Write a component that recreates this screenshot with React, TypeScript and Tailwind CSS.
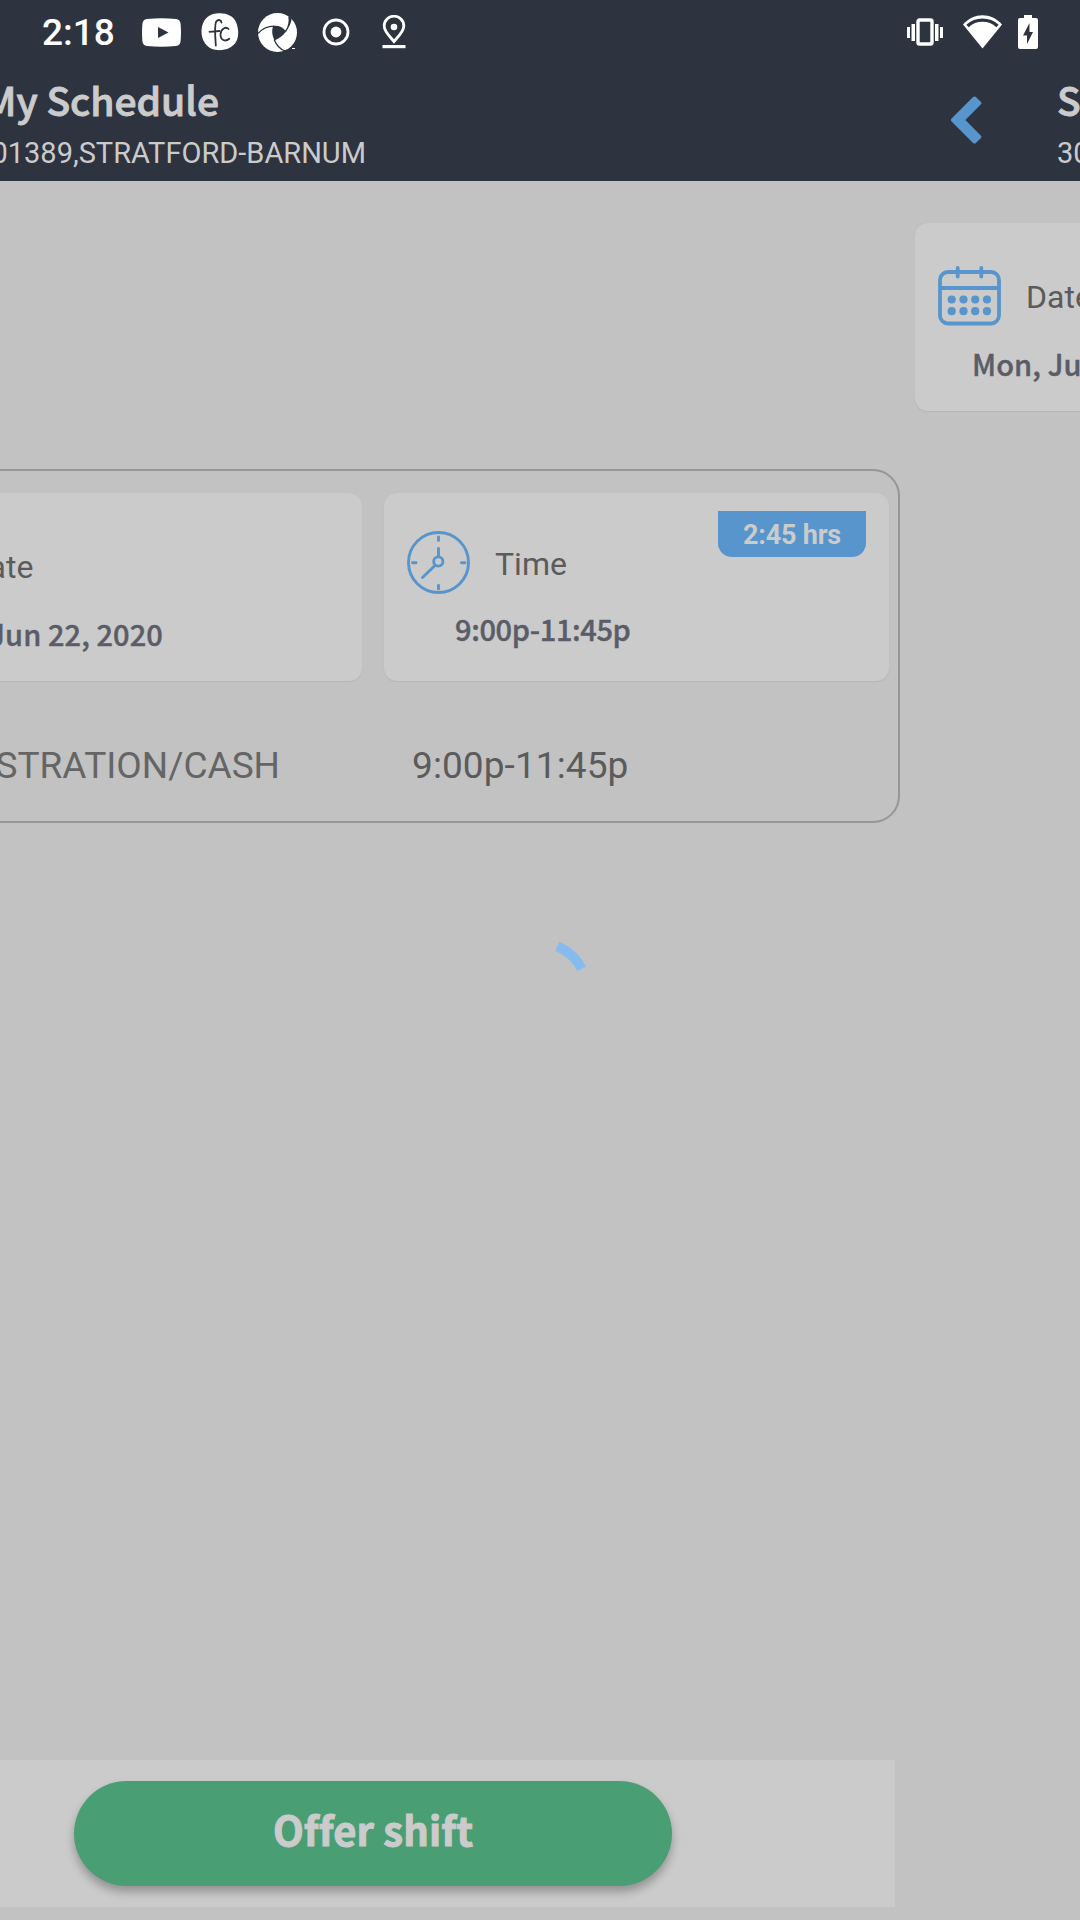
import React from "react";

const ROBOTO = "font-[Roboto,sans-serif]";
const SOURCE = "font-['Noto_Sans_CJK_SC',sans-serif]";

function YoutubeIcon() {
  return (
    <svg className="ml-[28px] h-[29px] w-[39px] shrink-0" viewBox="0 0 39 29">
      <path fill="#fff" d="M5 1Q19.500-.6 34 1Q38.300 1.500 38.600 6Q39.400 14.500 38.600 23Q38.300 27.500 34 28Q19.500 29.600 5 28Q.7 27.500.4 23Q-.4 14.500.4 6Q.7 1.500 5 1Z" />
      <path fill="#2d333f" d="M16 9L26.500 14.500L16 20Z" />
    </svg>
  );
}

function FcIcon() {
  return (
    <svg className="ml-[20px] h-[38px] w-[38px] shrink-0" viewBox="0 0 38 38">
      <path fill="#fff" d="M15 .6C24-.6 31.500 2 35 9C38.500 18 38 27 32.500 32C27 37.600 17 38.500 10 35.500C3 31.500.3 25 .5 17.500C1 8 6.500 1.500 15 .6Z" />
      <g fill="none" stroke="#2d333f" strokeWidth="1.800" strokeLinecap="round">
        <path d="M20.500 9.500C20 6.500 16.500 6 15 9C13.300 13 14.300 24 14.800 32.500" />
        <path d="M8.500 18.800L18.500 18" />
        <path d="M27.500 16C25 13.300 20 15.500 19.500 21C19.200 27.500 24.500 29 28.300 25.800" />
      </g>
    </svg>
  );
}

function PinwheelIcon() {
  return (
    <svg className="ml-[19px] h-[39px] w-[39px] shrink-0" viewBox="0 0 39 39">
      <circle cx="19.500" cy="19.500" r="19.500" fill="#fff" />
      <path fill="#2d333f" d="M15 13C20 12 25 14 28 18.500C25.500 22.500 21 25.500 16.500 27.500C14 22.500 13.500 18 15 13Z" />
      <g fill="none" stroke="#2d333f" strokeWidth="1.300">
        <path d="M0 20.500C4 16 10 13.200 16 13.200" />
        <path d="M27.500 18.500C30.500 14.500 32 9 31 3.500" />
        <path d="M16.200 26.500C18 31.500 22 36 27 38" />
      </g>
      <path fill="#2d333f" d="M30.800 3.500L33.500 5.500Q33.500 10 30 15Q31.800 9 30.800 3.500ZM25.500 39L26 37.500L33 35.300L36 33L39 36V39Z" />
      <path stroke="#fff" strokeWidth="1" d="M34 35.500h3" />
    </svg>
  );
}

function StatusBar() {
  return (
    <div className="flex h-[64px] shrink-0 items-center">
      <span className={`${ROBOTO} ml-[42px] w-[72px] pt-[1px] text-[37px] leading-[64px] font-medium whitespace-nowrap text-white`}>2:18</span>
      <YoutubeIcon />
      <FcIcon />
      <PinwheelIcon />
      <svg className="ml-[25px] h-[28px] w-[28px] shrink-0" viewBox="0 0 28 28">
        <circle cx="14" cy="14" r="12" fill="none" stroke="#fff" strokeWidth="2.800" />
        <circle cx="14" cy="14" r="5.400" fill="#fff" />
      </svg>
      <svg className="ml-[32px] h-[34px] w-[24px] shrink-0" viewBox="0 0 24 34">
        <path fill="none" stroke="#fff" strokeWidth="2.800" d="M12 26.500C7 20.500 2.200 16.500 2.200 11A9.800 9.800 0 0 1 21.800 11C21.800 16.500 17 20.500 12 26.500Z" />
        <circle cx="12" cy="12" r="3.300" fill="#fff" />
        <path fill="#fff" d="M.5 30h23v3.200h-23z" />
      </svg>
      <svg className="ml-[500px] h-[28px] w-[38px] shrink-0" viewBox="0 0 38 28">
        <g fill="#fff">
          <path d="M1 9h3v11H1zM5.500 6h3.500v17h-3.500zM29 6h3.500v17h-3.500zM34 9h3v11h-3z" />
        </g>
        <rect x="12" y="2" width="14" height="24" rx="1.500" fill="none" stroke="#fff" strokeWidth="3.400" />
      </svg>
      <svg className="ml-[19px] h-[34px] w-[39px] shrink-0" viewBox="0 0 39 34">
        <path fill="#fff" d="M0 9.500C11-2.800 28-2.800 39 9.500L19.500 33.500Z" />
        <path fill="none" stroke="#2d333f" strokeWidth="3.400" d="M4.500 11C13 3.200 26 3.200 34.500 11" />
      </svg>
      <svg className="ml-[16px] h-[34px] w-[20px] shrink-0" viewBox="0 0 20 34">
        <path fill="#fff" d="M6 0h8v3h4q2 0 2 2v27q0 2-2 2H2q-2 0-2-2V5q0-2 2-2h4z" />
        <path fill="#2d333f" d="M11.500 8L5 20.500h4V29L15 17h-3.500z" />
      </svg>
    </div>
  );
}

function Header() {
  return (
    <div className="flex h-[117px] shrink-0 text-[#cbcbcb]">
      <div className="flex w-[895px] flex-col">
        <div className={`${SOURCE} flex h-[70px] w-[219px] justify-end text-[39px] leading-[70px] font-medium whitespace-nowrap [-webkit-text-stroke:0.9px_#cbcbcb]`}>My Schedule</div>
        <div className={`${ROBOTO} flex w-[366px] justify-end text-[29px] leading-[38px] whitespace-nowrap`}>301389,STRATFORD-BARNUM</div>
      </div>
      <svg className="mt-[31px] ml-[55px] h-[50px] w-[32px] shrink-0" viewBox="0 0 32 50">
        <path fill="#5795cc" stroke="#5795cc" strokeWidth="4" strokeLinejoin="round" d="M24.500 3.500L29.300 8.200L12.500 25L29.300 41.800L24.500 46.500L3 25Z" />
      </svg>
      <div className="ml-[75px] w-[23px] overflow-hidden whitespace-nowrap">
        <div className={`${SOURCE} h-[70px] text-[39px] leading-[70px] font-medium [-webkit-text-stroke:0.9px_#cbcbcb]`}>Shift Details</div>
        <div className={`${ROBOTO} text-[29px] leading-[38px]`}>301389,STRATFORD-BARNUM</div>
      </div>
    </div>
  );
}

const CARD = "h-[188px] shrink-0 rounded-[13px] bg-[#cbcbcb] shadow-[0_1px_1px_#b6b6b6,0_0_1px_#b8b8b8]";

function CalendarIcon() {
  return (
    <svg className="h-[60px] w-[63px] shrink-0" viewBox="0 0 63 60">
      <g fill="none" stroke="#5795cc" strokeWidth="3.800">
        <rect x="2" y="6" width="59" height="51.500" rx="8" />
        <path d="M2 22h59" />
        <path d="M19.700 2v8.500M43.300 2v8.500" strokeLinecap="round" />
      </g>
      <g fill="#5795cc">
        {[33.5, 45.2].map((y) => [13.7, 25.5, 37.2, 49].map((x) => <circle key={`${x}-${y}`} cx={x} cy={y} r="4.100" />))}
      </g>
    </svg>
  );
}

function ClockIcon() {
  return (
    <svg className="h-[64px] w-[64px] shrink-0" viewBox="0 0 64 64">
      <g fill="none" stroke="#5795cc" strokeWidth="2.900" strokeLinecap="round">
        <circle cx="31.500" cy="31.500" r="30" />
        <path d="M31.500 6v3.500M31.500 54.500V58M5.500 31.800H9M54.500 31.800H58M31.500 17.500v8M28 34.500L15.500 46.500" />
        <circle cx="31.300" cy="30.500" r="4.600" />
      </g>
    </svg>
  );
}

function DateCard() {
  return (
    <div className={`${CARD} w-[505px] whitespace-nowrap`}>
      <div className="flex h-[103px] items-end pl-[23px]">
        <CalendarIcon />
        <span className={`${ROBOTO} ml-[25px] text-[32px] leading-[58px] text-[#5b5b5b]`}>Date</span>
      </div>
      <div className={`${SOURCE} mt-[17px] pl-[57px] text-[29px] leading-[40px] font-medium tracking-[0.08px] text-[#5a5d67] [-webkit-text-stroke:0.4px_#5a5d67]`}>Mon, Jun 22, 2020</div>
    </div>
  );
}

function TimeCard() {
  return (
    <div className={`${CARD} w-[505px] whitespace-nowrap`}>
      <div className="flex h-[102px] items-end pl-[23px]">
        <ClockIcon />
        <span className={`${ROBOTO} ml-[24px] text-[32px] leading-[62px] text-[#5b5b5b]`}>Time</span>
        <div className={`${ROBOTO} mt-[18px] ml-auto mr-[23px] h-[46px] w-[148px] self-start rounded-b-[14px] bg-[#5795cc] text-center text-[27px] leading-[48px] font-bold tracking-[-0.2px] text-[#cbcbcb]`}>2:45 hrs</div>
      </div>
      <div className={`${SOURCE} mt-[13px] pl-[71px] text-[29px] leading-[40px] font-medium tracking-[-0.38px] text-[#5a5d67] [-webkit-text-stroke:0.4px_#5a5d67]`}>9:00p-11:45p</div>
    </div>
  );
}

export default function App() {
  return (
    <div className="relative flex h-[1920px] w-[1080px] flex-col overflow-hidden bg-[#c2c2c2]">
      <div className="bg-[#2d333f]">
        <StatusBar />
        <Header />
      </div>
      <div className="flex min-h-0 flex-1">
        <div className="flex w-[895px] shrink-0 flex-col">
          <div className="mt-[288px] -mr-[5px] -ml-[30px] h-[354px] shrink-0 rounded-[27px] border-2 border-[#969696]">
            <div className="mt-[22px] flex w-[917px] justify-end gap-[22.500px]">
              <DateCard />
              <TimeCard />
            </div>
            <div className={`${ROBOTO} mt-[55px] flex text-[37px] leading-[60px] whitespace-nowrap`}>
              <div className="flex w-[308px] shrink-0 justify-end text-[#656565]">REGISTRATION/CASH</div>
              <div className="ml-[132px] tracking-[0.1px] text-[#5b5b5b]">9:00p-11:45p</div>
            </div>
          </div>
          <div className="mt-auto mb-[13px] h-[147px] bg-[#cbcbcb] pt-[21px]">
            <button className={`${SOURCE} ml-[74px] block h-[105px] w-[598px] rounded-full bg-[#4a9e74] pb-[8px] text-center text-[40px] leading-[95px] font-bold tracking-[0.1px] text-[#cbcbcb] shadow-[0_6px_10px_rgba(0,0,0,0.28)] [-webkit-text-stroke:1px_#cbcbcb] [font-variant-ligatures:common-ligatures]`}>Offer shift</button>
          </div>
        </div>
        <div className="w-[185px] overflow-hidden pt-[42px] pl-[20px]">
          <DateCard />
        </div>
      </div>
      <svg className="absolute top-[930px] left-[480px] h-[120px] w-[120px]" viewBox="0 0 120 120">
        <path fill="none" stroke="#86bbee" strokeWidth="10" d="M77.300 16.300A47 47 0 0 1 101.800 38.800" />
      </svg>
    </div>
  );
}
